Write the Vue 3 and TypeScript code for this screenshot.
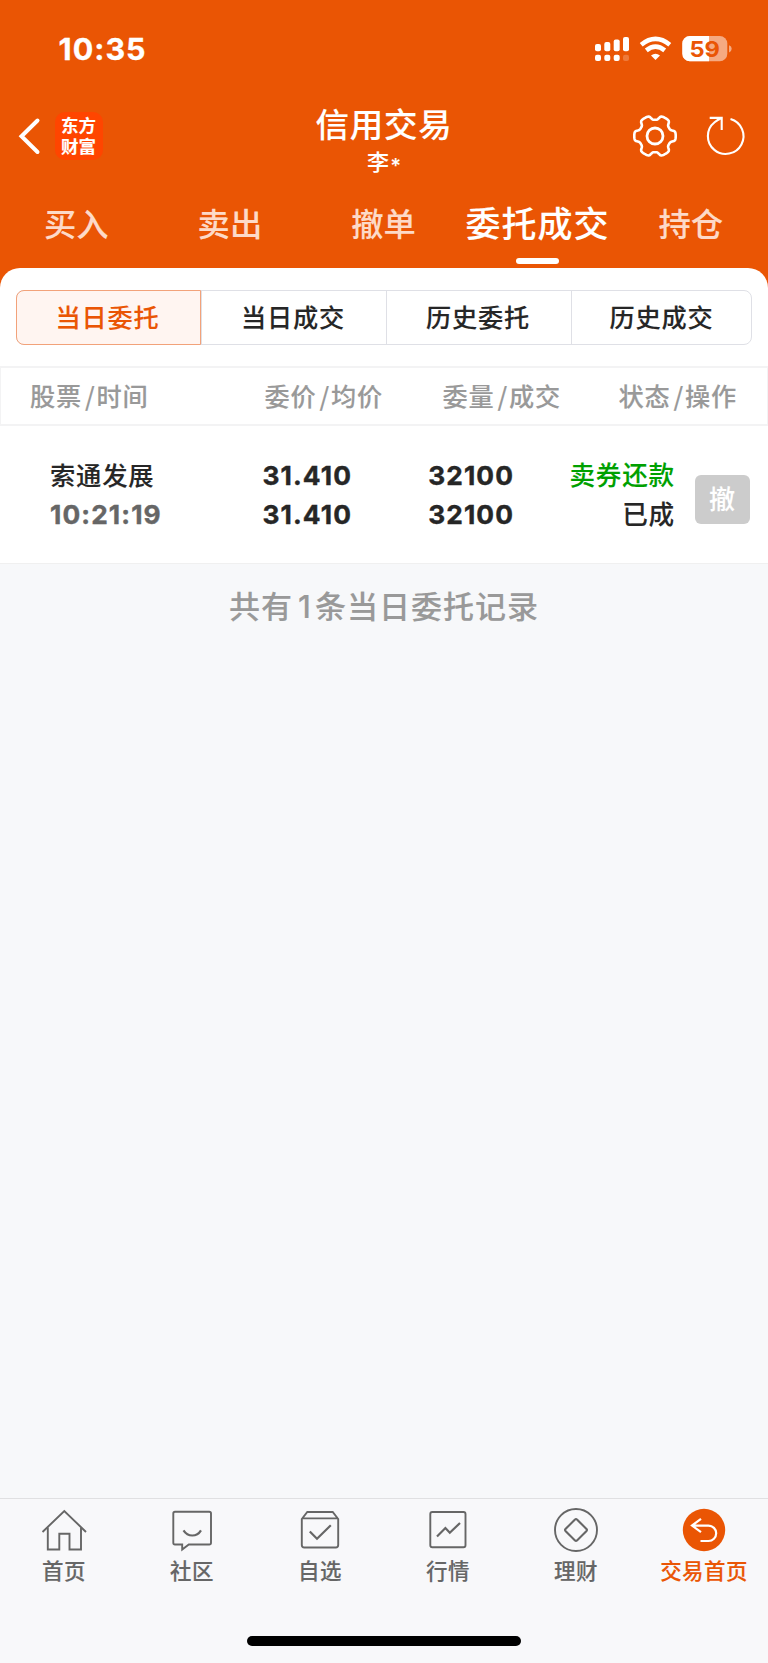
<script setup lang="ts">
import { ref } from 'vue'

interface Order {
  name: string
  time: string
  price: string
  average: string
  quantity: string
  filled: string
  side: string
  status: string
}

const tabs: string[] = ['买入', '卖出', '撤单', '委托成交', '持仓']
const activeTab = ref(3)

const segments: string[] = ['当日委托', '当日成交', '历史委托', '历史成交']
const activeSegment = ref(0)

const columns: [string, string][] = [
  ['股票', '时间'],
  ['委价', '均价'],
  ['委量', '成交'],
  ['状态', '操作'],
]

const orders: Order[] = [
  {
    name: '索通发展',
    time: '10:21:19',
    price: '31.410',
    average: '31.410',
    quantity: '32100',
    filled: '32100',
    side: '卖券还款',
    status: '已成',
  },
]

const navItems: { id: string; label: string }[] = [
  { id: 'home', label: '首页' },
  { id: 'community', label: '社区' },
  { id: 'watch', label: '自选' },
  { id: 'market', label: '行情' },
  { id: 'wealth', label: '理财' },
  { id: 'trade', label: '交易首页' },
]

// Outline of the six-toothed settings gear, centred on (24, 24).
function gearOutline(): string {
  const points: string[] = []
  for (let deg = 0; deg < 360; deg += 3) {
    const a = (deg * Math.PI) / 180
    const r = 18.4 + 2.3 * (Math.tanh(2.4 * (Math.cos(6 * a) + 0.25)) / Math.tanh(2.4))
    points.push(`${(24 + r * Math.cos(a)).toFixed(2)} ${(24 + r * Math.sin(a)).toFixed(2)}`)
  }
  return `M${points.join('L')}Z`
}
const gearPath = gearOutline()
</script>

<template>
  <div class="screen">
    <header class="top">
      <div class="status-bar">
        <span class="clock">10:35</span>
        <svg class="status-icons" width="140" height="30" viewBox="592 34 140 30">
          <g fill="#fff">
            <rect x="595" y="44" width="6" height="7.3" rx="2" />
            <rect x="604.3" y="42" width="6" height="9.3" rx="2" />
            <rect x="613.7" y="39.5" width="6" height="11.8" rx="2" />
            <rect x="623" y="37" width="6" height="14.3" rx="2" />
            <rect x="595" y="54.7" width="6" height="6.3" rx="2" />
            <rect x="604.3" y="54.7" width="6" height="6.3" rx="2" />
            <rect x="613.7" y="54.7" width="6" height="6.3" rx="2" />
            <rect x="623" y="54.7" width="6" height="6.3" rx="2" opacity=".22" />
            <path d="M651 55.5Q655.5 51.8 660 55.5L655.5 60Z" />
          </g>
          <g fill="none" stroke="#fff" stroke-width="4.6">
            <path d="M641.2 44.7Q655.5 33 669.8 44.7" />
            <path d="M646.3 50.4Q655.5 43 664.7 50.4" />
          </g>
          <rect x="682.3" y="36" width="45" height="25.3" rx="7.5" fill="#f5aa82" />
          <path d="M709 36V61.3H689.8A7.5 7.5 0 0 1 682.3 53.8V43.5A7.5 7.5 0 0 1 689.8 36Z" fill="#fff" />
          <path d="M729 45.2Q731.7 46 731.7 48.8T729 52.4Z" fill="#f5aa82" />
          <text x="689.4" y="56.6" textLength="30.5" lengthAdjust="spacingAndGlyphs" class="battery-level">59</text>
        </svg>
      </div>

      <div class="title-bar">
        <svg class="back" width="24" height="40" viewBox="0 0 24 40">
          <path d="M19.5 4.5L3.5 20.3L19.5 36" fill="none" stroke="#fff" stroke-width="4" stroke-linecap="round" />
        </svg>
        <div class="logo">东方<br />财富</div>
        <div class="heading">
          <h1>信用交易</h1>
          <p>李<span class="mask">*</span></p>
        </div>
        <svg class="gear" width="48" height="48" viewBox="0 0 48 48" fill="none" stroke="#fff" stroke-width="2.6">
          <path :d="gearPath" stroke-linejoin="round" />
          <circle cx="24" cy="24" r="8" stroke-width="2.8" />
        </svg>
        <svg class="refresh" width="48" height="48" viewBox="0 0 48 48" fill="none" stroke="#fff" stroke-width="2.1">
          <path d="M28.5 7A17.8 17.8 0 1 1 12.6 10.2Q15.5 7.9 19.5 6" />
          <path d="M7.7 5.9H19.7V18" />
        </svg>
      </div>

      <nav class="tabs">
        <button v-for="(tab, i) in tabs" :key="tab" :class="{ active: activeTab === i }" @click="activeTab = i">
          {{ tab }}
        </button>
      </nav>
    </header>

    <main class="sheet">
      <div class="segments">
        <button
          v-for="(segment, i) in segments"
          :key="segment"
          :class="{ active: activeSegment === i }"
          @click="activeSegment = i"
        >
          {{ segment }}
        </button>
      </div>
      <div class="columns">
        <span v-for="[first, second] in columns" :key="first">{{ first }}<i>/</i>{{ second }}</span>
      </div>
      <div v-for="order in orders" :key="order.time" class="order">
        <div class="stock"><span>{{ order.name }}</span><span class="time">{{ order.time }}</span></div>
        <div class="num"><span>{{ order.price }}</span><span>{{ order.average }}</span></div>
        <div class="num"><span>{{ order.quantity }}</span><span>{{ order.filled }}</span></div>
        <div class="state"><span class="sell">{{ order.side }}</span><span>{{ order.status }}</span></div>
        <button class="cancel">撤</button>
      </div>
    </main>

    <p class="summary">共有<span class="count">{{ orders.length }}</span>条当日委托记录</p>

    <footer class="bottom">
      <nav class="nav">
        <a v-for="item in navItems" :key="item.id" :class="{ current: item.id === 'trade' }">
          <svg width="48" height="48" viewBox="0 0 48 48" fill="none" stroke="#666" stroke-width="1.9">
            <template v-if="item.id === 'home'">
              <path d="M2.5 26L24.3 5L46 26" />
              <path d="M7.8 21.5V43.5H19.3V27.7H29.5V43.5H41V21.5" />
            </template>
            <template v-else-if="item.id === 'community'">
              <path d="M7 5.7H41.2Q43 5.7 43 7.5V36.7Q43 38.5 41.2 38.5H20.8L14.2 43.5V38.5H7Q5.3 38.5 5.3 36.7V7.5Q5.3 5.7 7 5.7Z" />
              <path d="M15.5 24.3Q18.8 29.5 24.3 29.5T33 24.3" stroke-width="2.2" />
            </template>
            <template v-else-if="item.id === 'watch'">
              <path d="M5.8 13L11.3 6H36.7L42.2 13V39Q42.2 41.5 39.7 41.5H8.3Q5.8 41.5 5.8 39ZM5.8 12.4H42.2" />
              <path d="M13.8 25.5L21 32.8L34.8 19.3" stroke-width="2.2" />
            </template>
            <template v-else-if="item.id === 'market'">
              <rect x="6.3" y="6" width="35.2" height="35.3" rx="2" />
              <path d="M13 30.5L21.4 22L25.8 26.8L36 17" stroke-width="2.2" />
            </template>
            <template v-else-if="item.id === 'wealth'">
              <circle cx="24" cy="24" r="21" />
              <path d="M23 13.5Q24 12.4 25 13.5L34.5 23Q35.4 24 34.5 25L25 34.5Q24 35.4 23 34.5L13.5 25Q12.6 24 13.5 23Z" stroke-width="2.1" />
            </template>
            <template v-else>
              <circle cx="24" cy="24" r="21.2" fill="#ea5504" stroke="none" />
              <path d="M21 12.8L12 19.6L21 26.2M12 19.6H28.5A7.7 7.7 0 0 1 28.5 35H20.5" stroke="#fff" stroke-width="2.2" />
            </template>
          </svg>
          <span>{{ item.label }}</span>
        </a>
      </nav>
      <div class="home-indicator"></div>
    </footer>
  </div>
</template>

<style>
body {
  margin: 0;
  background: #f7f8fa;
}
</style>

<style scoped>
.screen {
  width: 768px;
  height: 1663px;
  display: flex;
  flex-direction: column;
  background: #f7f8fa;
  color: #262626;
  font-family: Inter, 'Noto Sans CJK SC', sans-serif;
  font-weight: 500;
  -webkit-text-stroke: 0.12px currentColor;
  overflow: hidden;
}
button {
  border: 0;
  padding: 0;
  background: none;
  font: inherit;
  color: inherit;
  letter-spacing: inherit;
  white-space: nowrap;
}
h1,
p {
  margin: 0;
  font-weight: 500;
}
.top {
  height: 288px;
  flex: none;
  background: #ea5504;
  color: #fff;
}
.status-bar {
  height: 98px;
  box-sizing: border-box;
  padding: 0 36px 0 58.5px;
  display: flex;
  align-items: center;
  justify-content: space-between;
}
.clock {
  font-size: 30.5px;
  font-weight: 700;
  letter-spacing: 1px;
  margin-bottom: 2px;
  -webkit-text-stroke-width: 0.3px;
}
.battery-level {
  font: 700 21.5px Inter, sans-serif;
  fill: #ea5504;
  stroke: none;
}
.title-bar {
  height: 76px;
  display: grid;
  grid-template-columns: 24px 48px 1fr 48px 48px;
  align-items: center;
  padding: 0 18px;
}
.logo {
  box-sizing: border-box;
  width: 48px;
  height: 48px;
  padding-top: 3px;
  margin-left: 12.5px;
  border-radius: 10px;
  background: #ff4500;
  text-align: center;
  font-family: 'Noto Sans CJK SC', sans-serif;
  font-weight: 700;
  font-size: 17.5px;
  line-height: 20.5px;
}
.heading {
  text-align: center;
  margin-left: 24px;
  height: 76px;
}
.heading h1 {
  font-size: 33.5px;
  line-height: 50px;
  letter-spacing: 0.8px;
  padding-top: 2px;
}
.heading p {
  font-family: 'Noto Sans CJK SC', sans-serif;
  font-size: 22px;
  line-height: 20px;
  height: 22px;
}
.mask {
  margin-left: 1.5px;
  font-family: Inter, sans-serif;
  font-size: 20px;
  font-weight: 500;
  vertical-align: -3px;
  line-height: 1px;
}
.gear {
  margin-left: -23.3px;
}
.tabs {
  height: 94px;
  display: grid;
  grid-template-columns: repeat(5, 1fr);
}
.tabs button {
  height: 94px;
  display: flex;
  flex-direction: column;
  align-items: center;
  font-size: 32.3px;
  line-height: 101px;
  text-indent: -1px;
  color: #fddac8;
}
.tabs button.active {
  color: #fff;
  font-size: 35px;
  letter-spacing: 1px;
  text-indent: 0;
}
.tabs button.active::after {
  content: '';
  width: 43px;
  height: 6px;
  flex: none;
  margin-top: -17px;
  border-radius: 3px;
  background: #fff;
}
.sheet {
  flex: none;
  margin-top: -20px;
  height: 295px;
  border-bottom: 1px solid #f0f0f0;
  border-radius: 20px 20px 0 0;
  background: #fff;
}
.segments {
  width: 736px;
  height: 55px;
  margin: 22px 0 0 16px;
  box-sizing: border-box;
  display: grid;
  grid-template-columns: 184px 185px 185px 1fr;
  border: 1px solid #dfe0e6;
  border-radius: 8px;
  font-size: 25.2px;
  letter-spacing: 0.8px;
}
.segments button {
  padding: 0 2px 3px 0;
}
.segments button + button {
  border-left: 1.5px solid #dfe0e6;
}
.segments button:last-child {
  padding-right: 0;
}
.segments button.active {
  margin: -1px 0 -1px -1px;
  border: 1.5px solid #f2a27a;
  border-radius: 8px 0 0 8px;
  background: #fff5f1;
  color: #ea5504;
}
.columns {
  height: 60px;
  margin-top: 21px;
  box-sizing: border-box;
  display: grid;
  grid-template-columns: 199px 183px 178px 176px;
  align-items: center;
  border: 2px solid #f3f3f4;
  border-left-width: 1px;
  border-right-width: 1px;
  color: #999;
  font-family: 'Noto Sans CJK SC', sans-serif;
  font-size: 25.2px;
  letter-spacing: 0.8px;
  text-align: right;
  padding-bottom: 2px;
}
.columns span:first-child {
  text-align: left;
  padding-left: 29px;
}
.columns i {
  font-style: normal;
  margin: 0 1px 0 3px;
}
.order {
  height: 138px;
  display: grid;
  grid-template-columns: 201px 151px 162px 161px 76px;
  align-items: center;
  font-size: 25.3px;
  letter-spacing: 0.8px;
  line-height: 39.5px;
}
.order div {
  display: flex;
  flex-direction: column;
  align-items: flex-end;
}
.order .stock {
  align-items: flex-start;
  padding-left: 50px;
}
.stock .time,
.num {
  font-size: 26.3px;
  font-weight: 700;
  letter-spacing: 1.1px;
  -webkit-text-stroke-width: 0.4px;
}
.stock .time {
  color: #666;
}
.state .sell {
  color: #00a000;
}
.state {
  font-size: 25.6px;
}
.cancel {
  height: 49px;
  margin: 9px 0 0 20px;
  width: 55px;
  border-radius: 6px;
  background: #ccc;
  color: #fff;
  font-size: 26px;
}
.summary {
  margin-top: 19px;
  text-align: center;
  font-size: 31px;
  line-height: 48px;
  letter-spacing: 1px;
  color: #999;
}
.count {
  margin: 0 3px 0 5px;
}
.bottom {
  margin-top: auto;
  height: 165px;
  box-sizing: border-box;
  border-top: 1px solid #e0e0e2;
  background: #f8f8fa;
}
.nav {
  height: 137px;
  display: grid;
  grid-template-columns: repeat(6, 1fr);
}
.nav a {
  display: flex;
  flex-direction: column;
  align-items: center;
  padding-top: 7px;
  color: #666;
  font-size: 21.5px;
  line-height: 34px;
  letter-spacing: 0.4px;
}
.nav a.current {
  color: #ea5504;
}
.home-indicator {
  width: 274px;
  height: 10px;
  margin: 0 auto;
  border-radius: 5px;
  background: #000;
}
</style>
